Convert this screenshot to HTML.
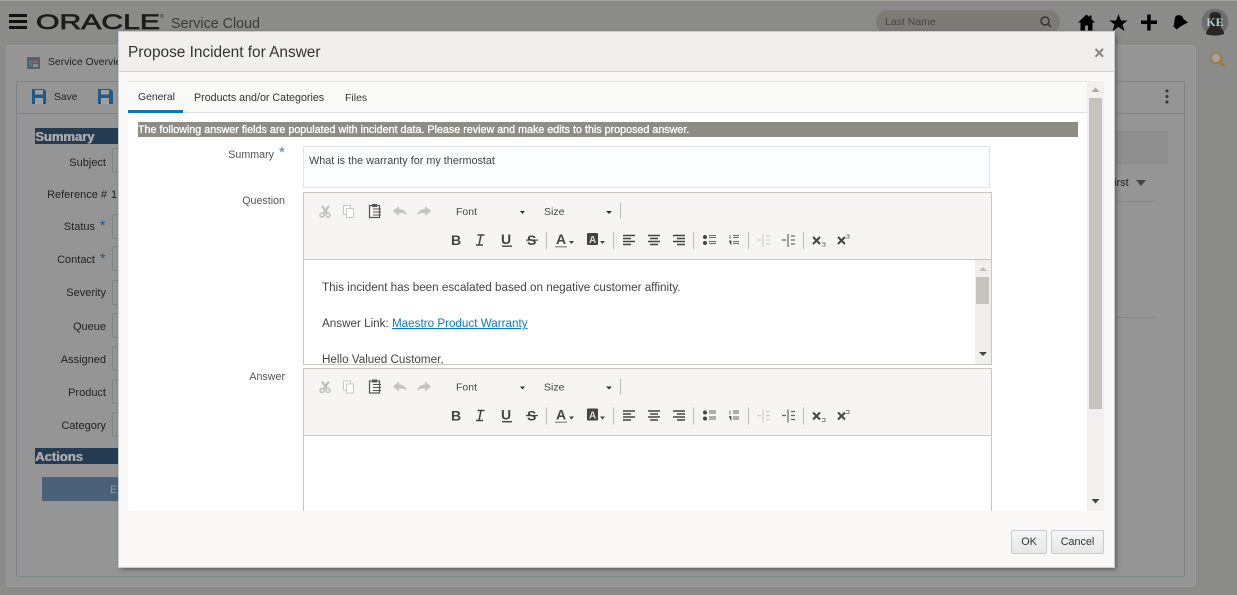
<!DOCTYPE html>
<html><head><meta charset="utf-8"><style>
html,body{margin:0;padding:0}
body{width:1237px;height:595px;position:relative;overflow:hidden;background:#8b8b89;font-family:"Liberation Sans",sans-serif;color:#333}
.a{position:absolute;white-space:nowrap}
.bgl{color:#222;font-size:11px;text-align:right;width:100px;left:6px}
.inp{position:absolute;left:112px;width:20px;height:23px;border:1px solid #838381;border-radius:2px}
.l{position:absolute;font-size:10.700px;color:#555;text-align:right;width:120px;left:165px;white-space:nowrap}
.ed{position:absolute;left:303px;width:687px;border:1px solid #c9c7c0;background:#fff}
.tb{position:absolute;left:0;top:0;width:687px;height:66px;background:#f6f5f3;border-bottom:1px solid #c9c7c0}
.hd{position:absolute;left:35px;width:90px;height:16px;background:#233c53;color:#a9a9a9;font-size:13px;line-height:18px;font-weight:bold;text-shadow:.6px 0 0 #a9a9a9;white-space:nowrap}
svg{position:absolute;left:0;top:0;overflow:visible}
</style></head><body>
<div class="a" style="left:0;top:0;width:1237px;height:1px;background:#a8a4a0"></div>
<!-- background page -->
<div class="a" style="left:6px;top:45px;width:1188px;height:540px;background:#959595;border:1px solid #9b9b9b;border-radius:4px"></div>
<div class="a" style="left:16px;top:81px;width:1167px;height:494px;background:#959595;border:1px solid #7e868b;border-radius:2px"></div>
<div class="a" style="left:16px;top:113px;width:1168px;height:1px;background:#7e868b"></div>
<div class="a" style="left:876px;top:10px;width:184px;height:23px;background:#7c7b76;border-radius:12px"></div>
<svg width="1237" height="595">
<rect x="9" y="14" width="18" height="3" fill="#111"/><rect x="9" y="20" width="18" height="3" fill="#111"/><rect x="9" y="26" width="18" height="3" fill="#111"/>
<text x="36" y="29" font-family="Liberation Sans" font-size="21" fill="#1d1d1d" textLength="124" lengthAdjust="spacingAndGlyphs" stroke="#1d1d1d" stroke-width=".7">ORACLE</text>
<text x="160" y="18" font-size="5" fill="#222">®</text>
<!-- right icons -->
<path d="M1086.500 14.500L1078 22.500H1080.500V30.500H1085V25.500H1088V30.500H1092.500V22.500H1095L1091.500 19.200V15.500H1089.500V17.300Z" fill="#000"/>
<path d="M1118.500 14L1121 20.500H1127.500L1122.500 24.500L1124.500 31L1118.500 27L1112.500 31L1114.500 24.500L1109.500 20.500H1116Z" fill="#000"/>
<rect x="1141" y="20.500" width="16" height="3.500" fill="#000"/><rect x="1147.200" y="14.500" width="3.500" height="16" fill="#000"/>
<path d="M1176 16C1179 14 1183 15.500 1183.500 19L1188 22.500L1182 25.500L1176.500 29.500C1175.500 28 1173.500 27 1173.500 26C1175 22 1174 18 1176 16Z" fill="#000"/>
<circle cx="1215" cy="22" r="14" fill="#6d6d6b" stroke="#8a8a88" stroke-width="1.500"/>
<path d="M1206 34C1207 30 1208 29 1209.500 28V17C1209.500 13 1212 12 1215 12C1218 12 1221 13 1221 17V28C1222 29 1224 30 1224 34C1220 36 1210 36 1206 34Z" fill="#262626"/>
<text x="1215" y="26" text-anchor="middle" font-family="Liberation Serif" font-size="12" font-weight="bold" fill="#b9ced6">KE</text>
<circle cx="1216" cy="58" r="5" fill="#a5a5a8" stroke="#a8742f" stroke-width="1.500"/><path d="M1220 62L1224 66" stroke="#a8742f" stroke-width="2.500"/>
<!-- search icon -->
<circle cx="1045" cy="21" r="4" fill="none" stroke="#333" stroke-width="1.500"/><path d="M1048 24L1051 27" stroke="#333" stroke-width="1.500"/>
<!-- toolbar bg -->
<rect x="27" y="57" width="13" height="12" fill="#56616a"/><rect x="29" y="60" width="3" height="6" fill="#4d7a7a"/><rect x="33" y="60" width="5" height="3" fill="#8f5f6c"/><rect x="33" y="64" width="5" height="3" fill="#8a8f8a"/>
<path d="M32 89H44L46 91V104H32Z" fill="#1f5a88"/><rect x="35" y="90" width="8" height="4.500" fill="#a0a0a0"/><rect x="35" y="98" width="8" height="6" fill="#a0a0a0"/>
<path d="M98 89H110L113 91V104H98Z" fill="#1f5a88"/><rect x="101" y="90" width="8" height="4.500" fill="#a0a0a0"/><rect x="101" y="98" width="8" height="6" fill="#a0a0a0"/>
<circle cx="1167" cy="91" r="1.500" fill="#333"/><circle cx="1167" cy="96.500" r="1.500" fill="#333"/><circle cx="1167" cy="102" r="1.500" fill="#333"/>
<path d="M1136 180H1146L1141 186Z" fill="#444"/>
</svg>
<div class="a" style="left:171px;top:16px;font-size:14.300px;color:#3a3a3a">Service Cloud</div>
<div class="a" style="left:885px;top:16px;font-size:10.500px;color:#444">Last Name</div>
<div class="a" style="left:48px;top:57px;font-size:10.400px;color:#222">Service Overview</div>
<div class="a" style="left:54px;top:92px;font-size:10.300px;color:#222">Save</div>
<div class="hd" style="top:128px">Summary</div>
<div class="hd" style="top:448px">Actions</div>
<div class="a" style="left:42px;top:477px;width:90px;height:24px;background:#4b6178;color:#8a99a8;font-size:11px;line-height:26px;text-indent:68px">E</div>
<div class="a bgl" style="top:157px">Subject</div>
<div class="a bgl" style="top:189px;left:7px">Reference #</div><div class="a" style="left:111px;top:189px;font-size:11px;color:#222">1</div>
<div class="a bgl" style="top:221px;left:-5px">Status</div><div class="a" style="left:100px;top:217px;font-size:14px;color:#24527a">*</div>
<div class="a bgl" style="top:254px;left:-5px">Contact</div><div class="a" style="left:100px;top:250px;font-size:14px;color:#24527a">*</div>
<div class="a bgl" style="top:287px">Severity</div>
<div class="a bgl" style="top:321px">Queue</div>
<div class="a bgl" style="top:354px">Assigned</div>
<div class="a bgl" style="top:387px">Product</div>
<div class="a bgl" style="top:420px">Category</div>
<div class="inp" style="top:148px"></div><div class="inp" style="top:214px"></div><div class="inp" style="top:246px"></div><div class="inp" style="top:280px"></div><div class="inp" style="top:313px"></div><div class="inp" style="top:346px"></div><div class="inp" style="top:379px"></div><div class="inp" style="top:412px"></div>
<div class="a" style="left:1114px;top:131px;width:54px;height:31px;background:#8f8f8f;border-top:1px solid #868a8c;border-bottom:1px solid #868a8c"></div>
<div class="a" style="left:1114px;top:177px;font-size:11px;color:#222">irst</div>
<div class="a" style="left:1114px;top:201px;width:42px;height:1px;background:#868a8c"></div>
<div class="a" style="left:1114px;top:317px;width:42px;height:1px;background:#868a8c"></div>

<!-- modal -->
<div class="a" style="left:119px;top:32px;width:995px;height:535px;background:#f9f8f6;box-shadow:2px 2px 5px rgba(0,0,0,.45);outline:1px solid #c3cdd3">
  <div class="a" style="left:0;top:0;width:995px;height:39px;background:#f0efee;border-bottom:1px solid #cdd5db"></div>
  <div class="a" style="left:9px;top:12px;font-size:15.400px;color:#333">Propose Incident for Answer</div>
  <div class="a" style="left:975px;top:12px;font-size:18px;font-weight:bold;color:#848484;line-height:18px">×</div>
</div>
<div class="a" style="left:128px;top:81px;width:960px;height:430px;background:#fff"></div>
<div class="a" style="left:128px;top:81px;width:960px;height:30px;background:#f9f9f7;border-top:1px solid #dbe3e6;border-bottom:1px solid #dbe3e6"></div>
<div class="a" style="left:128px;top:110px;width:55px;height:3px;background:#0f75b8"></div>
<div class="a" style="left:138px;top:92px;font-size:10.400px;color:#333">General</div>
<div class="a" style="left:194px;top:92px;font-size:10.700px;color:#333">Products and/or Categories</div>
<div class="a" style="left:345px;top:92px;font-size:10.500px;color:#333">Files</div>
<div class="a" style="left:138px;top:122px;width:940px;height:15px;background:#8e8c85;color:#fff;font-size:10.740px;line-height:16px;overflow:hidden"><span style="-webkit-text-stroke:.3px #fff">The following answer fields are populated with incident data. Please review and make edits to this proposed answer.</span></div>
<!-- outer scrollbar -->
<div class="a" style="left:1087px;top:81px;width:17px;height:430px;background:#f1f0ee"></div>
<div class="a" style="left:1089px;top:98px;width:13px;height:311px;background:#c5c3bc"></div>

<div class="l" style="left:154px;top:149px">Summary</div><div class="a" style="left:279px;top:144px;font-size:15px;color:#3a87c0">*</div>
<div class="a" style="left:303px;top:146px;width:685px;height:40px;border:1px solid #e2e3e4;background:#fcfdfe;border-radius:1px"></div>
<div class="a" style="left:309px;top:155px;font-size:10.830px;color:#444">What is the warranty for my thermostat</div>
<div class="l" style="top:195px">Question</div>
<div class="l" style="top:371px">Answer</div>

<div class="ed" style="top:192px;height:171px;overflow:hidden">
  <div class="tb"></div>
  <div class="a" style="left:18px;top:86px;font-size:11.670px;color:#444;line-height:18px">This incident has been escalated based on negative customer affinity.<br><br>Answer Link: <span style="color:#0a79c0;text-decoration:underline">Maestro Product Warranty</span><br><br>Hello Valued Customer,</div>
  <div class="a" style="left:671px;top:67px;width:16px;height:104px;background:#f0efee"></div>
  <div class="a" style="left:672px;top:84px;width:13px;height:27px;background:#c5c3bc"></div>
  <svg width="687" height="172"><path d="M675 78L679 74L683 78Z" fill="#bbb"/><path d="M675 159H683L679 163Z" fill="#444"/></svg>
</div>
<div class="ed" style="top:368px;height:150px;overflow:hidden"><div class="tb"></div></div>
<div class="a" style="left:128px;top:511px;width:976px;height:56px;background:#f9f8f6"></div>
<svg width="1237" height="595">
<path d="M1091.500 92L1095.500 87.500L1099.500 92Z" fill="#aaa"/><path d="M1091.500 499H1099.500L1095.500 503.500Z" fill="#444"/>
<defs><g id="tbar">
<g fill="none" stroke="#c0c0c0" stroke-width="1.500"><circle cx="322" cy="215" r="2"/><circle cx="328" cy="215" r="2"/><path d="M322 206L327 213M329 206L324 213" stroke="#bbb" stroke-width="2"/></g>
<g fill="#fff" stroke="#c8c8c8"><rect x="343.500" y="205.500" width="7" height="9"/><rect x="346.500" y="208.500" width="7" height="9"/></g>
<rect x="369.500" y="205.500" width="10" height="12" fill="none" stroke="#555" stroke-width="1.200"/><rect x="372" y="204" width="5" height="3" fill="#555"/><path d="M373 209H381M373 212H381M373 215H381" stroke="#555"/>
<path d="M393 211L399 206V209C403 209 406 211 407 215C404 213 402 213 399 213V216Z" fill="#c4c4c4"/>
<path d="M431 211L425 206V209C421 209 418 211 417 215C420 213 422 213 425 213V216Z" fill="#c4c4c4"/>
<text x="456" y="215" font-size="10.500" fill="#444">Font</text><path d="M520 211H525L522.500 214Z" fill="#333"/>
<text x="544" y="215" font-size="10.500" fill="#444">Size</text><path d="M606 211H612L609 214Z" fill="#333"/>
<rect x="620" y="203" width="1" height="16" fill="#bbb"/>
<text x="451" y="245" font-size="14" font-weight="bold" fill="#444">B</text>
<path d="M477.500 235H484.500M476 245H483M481 235L479 245" fill="none" stroke="#444" stroke-width="1.600"/>
<text x="501" y="244" font-size="14" font-weight="bold" fill="#444">U</text><rect x="502" y="245.500" width="10" height="1.400" fill="#444"/>
<text x="527" y="245" font-size="14" font-weight="bold" fill="#444">S</text><rect x="526" y="239.500" width="12" height="1.200" fill="#444"/>
<rect x="546" y="232" width="1" height="17" fill="#bbb"/>
<text x="556" y="244" font-size="14" font-weight="bold" fill="#444">A</text><rect x="555" y="246" width="12" height="1.500" fill="#999"/><path d="M569 241H574L571.500 244Z" fill="#444"/>
<rect x="587" y="233" width="11" height="12" rx="1" fill="#444"/><text x="589" y="243" font-size="10" font-weight="bold" fill="#ddd">A</text><path d="M600 241H605L602.500 244Z" fill="#444"/>
<rect x="613" y="232" width="1" height="17" fill="#bbb"/>
<path d="M623 235.500H635M623 238.500H631M623 241.500H635M623 244.500H631" stroke="#444" stroke-width="1.500"/>
<path d="M648 235.500H660M650 238.500H658M648 241.500H660M650 244.500H658" stroke="#444" stroke-width="1.500"/>
<path d="M673 235.500H685M677 238.500H685M673 241.500H685M677 244.500H685" stroke="#444" stroke-width="1.500"/>
<rect x="693" y="232" width="1" height="17" fill="#bbb"/>
<circle cx="705" cy="237" r="2" fill="#444"/><circle cx="705" cy="243" r="2" fill="#444"/><path d="M709 235.500H716M709 237.500H716M709 241.500H716M709 243.500H716" stroke="#666" stroke-width=".9"/>
<path d="M730 235V239M729 241H731V245M733 235.500H739M733 237.500H739M733 241.500H739M733 243.500H739" stroke="#666" stroke-width=".9"/>
<rect x="748" y="232" width="1" height="17" fill="#bbb"/>
<path d="M763 234V247M766 236H770M766 240H770M766 244H770M757 240H761" stroke="#d0d0d0" stroke-width="1.200"/>
<path d="M788 234V247M791 236H795M791 240H795M791 244H795M782 240H786" stroke="#666" stroke-width="1.200"/>
<rect x="803" y="232" width="1" height="17" fill="#bbb"/>
<path d="M813 237L820 244M820 237L813 244" stroke="#444" stroke-width="2"/><path d="M822 243H825V246H822" fill="none" stroke="#666" stroke-width=".8"/>
<path d="M838 237L845 244M845 237L838 244" stroke="#444" stroke-width="2"/><path d="M846 235H849V238H846" fill="none" stroke="#666" stroke-width=".8"/>
</g></defs>
<use href="#tbar"/>
<use href="#tbar" y="175.500"/>
</svg>
<div class="a" style="left:1011px;top:530px;width:34px;height:22px;border:1px solid #c4cdd1;border-radius:2px;background:linear-gradient(#f4f5f5,#e6e8e8);font-size:10.800px;line-height:23px;text-align:center;color:#333">OK</div>
<div class="a" style="left:1051px;top:530px;width:51px;height:22px;border:1px solid #c4cdd1;border-radius:2px;background:linear-gradient(#f4f5f5,#e6e8e8);font-size:10.800px;line-height:23px;text-align:center;color:#333">Cancel</div>
</body></html>
